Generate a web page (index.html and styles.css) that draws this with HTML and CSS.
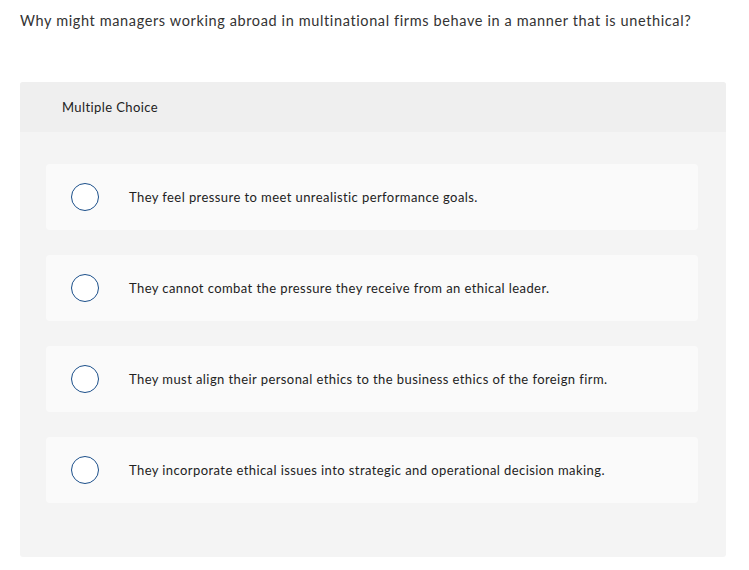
FILE: index.html
```html
<!DOCTYPE html>
<html>
<head>
<meta charset="utf-8">
<link rel="stylesheet" href="styles.css">
</head>
<body>
<p class="question">Why might managers working abroad in multinational firms behave in a manner that is unethical?</p>
<section class="panel">
  <header class="panel-head">Multiple Choice</header>
  <div class="options">
    <label class="option"><span class="radio"></span><span class="opt-text">They feel pressure to meet unrealistic performance goals.</span></label>
    <label class="option"><span class="radio"></span><span class="opt-text">They cannot combat the pressure they receive from an ethical leader.</span></label>
    <label class="option"><span class="radio"></span><span class="opt-text">They must align their personal ethics to the business ethics of the foreign firm.</span></label>
    <label class="option"><span class="radio"></span><span class="opt-text">They incorporate ethical issues into strategic and operational decision making.</span></label>
  </div>
</section>
</body>
</html>
```

FILE: styles.css
```css
* { box-sizing: border-box; }
body {
  margin: 0;
  background: #fff;
  font-family: Lato, "Liberation Sans", sans-serif;
  font-variant-ligatures: none;
  color: #222;
}
.question {
  margin: 0;
  padding: 11px 0 0 20px;
  font-size: 14.5px;
  line-height: 20px;
  letter-spacing: 0.62px;
  color: #333;
}
.panel {
  margin: 51px 23px 0 20px;
  background: #f4f4f4;
  border-radius: 3px;
  overflow: hidden;
}
.panel-head {
  height: 50px;
  background: #efefef;
  padding-left: 42px;
  display: flex;
  align-items: center;
  font-size: 13px;
  letter-spacing: 0.4px;
  color: #222;
}
.options {
  padding: 32px 28px 54px 26px;
  display: flex;
  flex-direction: column;
  gap: 25px;
}
.option {
  height: 66px;
  background: #fafafa;
  border-radius: 4px;
  display: flex;
  align-items: center;
  padding-left: 25px;
}
.radio {
  width: 28px;
  height: 28px;
  border: 1.5px solid #1b4f8a;
  border-radius: 50%;
  background: #fff;
  flex: none;
}
.opt-text {
  margin-left: 30px;
  font-size: 13px;
  letter-spacing: 0.42px;
  color: #222;
}
```
